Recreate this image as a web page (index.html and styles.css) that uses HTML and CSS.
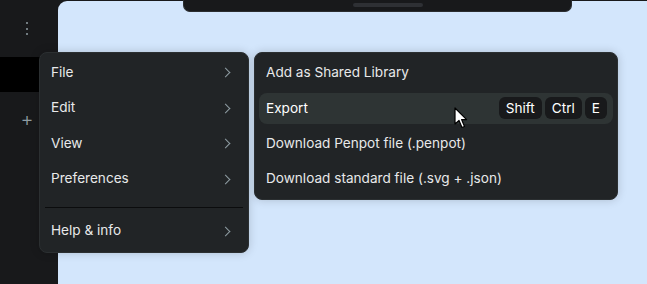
FILE: index.html
```html
<!DOCTYPE html>
<html lang="en">
<head>
<meta charset="UTF-8" />
<title>Penpot - main menu</title>
<link rel="stylesheet" href="styles.css">
</head>
<body>

<div class="workspace">

  <!-- BARRA LATERAL -->
  <aside class="sidebar">
    <div class="sidebar-dots">
      <span></span><span></span><span></span>
    </div>
    <div class="sidebar-page"></div>
    <div class="sidebar-add">+</div>
  </aside>

  <!-- CANVAS -->
  <main class="viewport">
    <div class="toolbar">
      <div class="toolbar-handle"></div>
    </div>

    <div class="menus">
      <ul class="menu main-menu">
        <li class="menu-item">File <span class="chevron"></span></li>
        <li class="menu-item">Edit <span class="chevron"></span></li>
        <li class="menu-item">View <span class="chevron"></span></li>
        <li class="menu-item">Preferences <span class="chevron"></span></li>
        <li class="separator"></li>
        <li class="menu-item">Help &amp; info <span class="chevron"></span></li>
      </ul>

      <ul class="menu sub-menu">
        <li class="menu-item">Add as Shared Library</li>
        <li class="menu-item hover">Export
          <span class="shortcut">
            <span class="key">Shift</span>
            <span class="key">Ctrl</span>
            <span class="key">E</span>
          </span>
        </li>
        <li class="menu-item">Download Penpot file (.penpot)</li>
        <li class="menu-item">Download standard file (.svg + .json)</li>
      </ul>
    </div>

    <!-- cursor do mouse -->
    <svg class="cursor" width="14" height="22" viewBox="0 0 14 22">
      <path d="M1 1 L1 17 L5 13.5 L8 20.5 L10.5 19.5 L7.6 12.6 L12.6 12.6 Z" fill="#fff" stroke="#000" stroke-width="1.2" stroke-linejoin="round"/>
    </svg>
  </main>

</div>

</body>
</html>
```

FILE: styles.css
```css
/* BASE */
* {
  box-sizing: border-box;
}
body {
  margin: 0;
  background: #18191b;
  font-family: Inter, 'Open Sans', sans-serif;
  font-size: 13.6px;
  color: #e8e9ea;
  overflow: hidden;
}
.workspace {
  display: flex;
  height: 284px;
}

/* BARRA LATERAL */
.sidebar {
  width: 58px;
  flex-shrink: 0;
  padding-top: 22px;
}
.sidebar-dots {
  display: flex;
  flex-direction: column;
  align-items: center;
  gap: 3.5px;
  width: 54px;
}
.sidebar-dots span {
  width: 2px;
  height: 2px;
  border-radius: 50%;
  background: #8f9da3;
}
.sidebar-page {
  height: 35px;
  margin-top: 22px;
  background: #000;
}
.sidebar-add {
  width: 54px;
  margin-top: 16px;
  text-align: center;
  color: #8f9da3;
  font-size: 20px;
  font-weight: 300;
  line-height: 22px;
}

/* CANVAS */
.viewport {
  position: relative;
  flex: 1;
  margin-top: 1px;
  background: #d3e6fc;
  border-top-left-radius: 9px;
  display: flex;
  flex-direction: column;
}
.toolbar {
  width: 389px;
  height: 12px;
  margin-left: 125px;
  margin-top: -1px;
  background: #18191b;
  border: 1px solid #2a2d30;
  border-top: none;
  border-radius: 0 0 7px 7px;
  display: flex;
  justify-content: center;
}
.toolbar-handle {
  width: 70px;
  height: 4px;
  margin-top: 3px;
  margin-left: 20px;
  border-radius: 2px;
  background: #2e3034;
}

/* MENUS */
.menus {
  display: flex;
  align-items: flex-start;
  gap: 5px;
  margin-top: 40px;
  margin-left: -19px;
}
.menu {
  list-style: none;
  margin: 0;
  padding: 4px;
  background: #212426;
  border: 1px solid #2b2f31;
  border-radius: 8px;
  box-shadow: 0 0 10px rgba(0, 0, 0, 0.18);
  display: flex;
  flex-direction: column;
  gap: 4.5px;
}
.main-menu {
  width: 210px;
  height: 201px;
}
.sub-menu {
  width: 364px;
}
.menu-item {
  height: 31px;
  padding: 0 12px 2px 7px;
  border-radius: 8px;
  display: flex;
  align-items: center;
  justify-content: space-between;
  white-space: nowrap;
}
.menu-item.hover {
  background: #2e3434;
  color: #fff;
  padding: 0 6px 0 7px;
}
.chevron {
  width: 7px;
  height: 7px;
  margin-right: 3px;
  margin-top: 2px;
  border-top: 1.3px solid #8f9da3;
  border-right: 1.3px solid #8f9da3;
  transform: rotate(45deg);
}
.separator {
  height: 1px;
  margin: 7.5px 1px 3.5px;
  background: #0b0c0d;
}

/* ATALHOS */
.shortcut {
  display: flex;
  gap: 3px;
}
.key {
  height: 22px;
  padding: 0 7px 1px;
  border-radius: 6px;
  background: #18191b;
  display: flex;
  align-items: center;
}

/* CURSOR */
.cursor {
  position: absolute;
  left: 396px;
  top: 106px;
}
```
